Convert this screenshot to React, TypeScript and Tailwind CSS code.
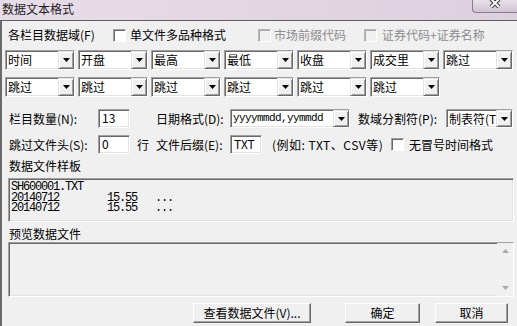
import React from 'react';

const sunken =
  'border border-t-[#a0a0a0] border-l-[#a0a0a0] border-b-white border-r-white shadow-[inset_1px_1px_0_#696969,inset_-1px_-1px_0_#e3e3e3]';

function Arrow() {
  return (
    <div className="w-[16px] h-full flex items-center justify-center bg-[#f0f0f0] border border-t-[#e3e3e3] border-l-[#e3e3e3] border-b-[#696969] border-r-[#696969] shadow-[inset_1px_1px_0_#ffffff,inset_-1px_-1px_0_#a0a0a0]">
      <svg width="7" height="4" viewBox="0 0 7 4">
        <path d="M0 0h7L3.5 4z" fill="#000" />
      </svg>
    </div>
  );
}

function Select({ value, width, mono = false }: { value: string; width: string; mono?: boolean }) {
  return (
    <div className={`${width} h-full flex bg-white ${sunken}`}>
      <div
        className={`flex-1 pl-[2px] flex items-center overflow-hidden whitespace-nowrap ${
          mono ? "font-['Liberation_Mono',monospace] text-[11px] tracking-[-0.6px]" : 'text-[12px]'
        }`}
      >
        {value}
      </div>
      <Arrow />
    </div>
  );
}

function Input({ value, width }: { value: string; width: string }) {
  return (
    <div className={`${width} h-full bg-white ${sunken} flex items-start pl-[3px] pt-[1px] text-[12px] leading-[14px]`}>
      {value}
    </div>
  );
}

function Check({ disabled = false }: { disabled?: boolean }) {
  return (
    <div
      className={`w-[13px] h-[13px] shrink-0 border ${
        disabled
          ? 'border-t-[#b8b8b8] border-l-[#b8b8b8] border-b-white border-r-white bg-[#f0f0f0] shadow-[inset_1px_1px_0_#a8a8a8]'
          : 'border-t-[#a0a0a0] border-l-[#a0a0a0] border-b-white border-r-white bg-white shadow-[inset_1px_1px_0_#696969]'
      }`}
    />
  );
}

function Button({ label, width }: { label: string; width: string }) {
  return (
    <div
      className={`${width} h-[20px] flex items-center justify-center text-[12px] bg-[#f0f0f0] border border-t-white border-l-white border-b-[#696969] border-r-[#696969] shadow-[inset_-1px_-1px_0_#a0a0a0]`}
    >
      {label}
    </div>
  );
}

export default function App() {
  const topFields = ['时间', '开盘', '最高', '最低', '收盘', '成交里', '跳过'];
  const lowFields = ['跳过', '跳过', '跳过', '跳过', '跳过', '跳过'];

  return (
    <div className="w-[517px] h-[326px] overflow-hidden flex flex-col bg-[#f0f0f0] text-black font-['Noto_Sans_CJK_SC',sans-serif] leading-none">
      {/* title bar */}
      <div className="h-[20px] shrink-0 flex justify-between bg-gradient-to-r from-[#e7dde7] via-[#e2d6e3] to-[#ddd0de]">
        <div className="pl-[2px] pt-[3px] text-[12px] text-[#1c1c1c]">数据文本格式</div>
        <div className="relative w-[45px] h-[13px] border border-t-0 border-r-0 border-[#8a7d8c] rounded-bl-[4px] bg-gradient-to-b from-[#e9e0ea] to-[#cfc3d1] flex justify-center">
          <svg width="12" height="9" viewBox="0 0 12 9" className="mt-[-1px]">
            <path d="M2 0l8 8M10 0L2 8" stroke="#3a3a3a" strokeWidth="4" />
            <path d="M2 0l8 8M10 0L2 8" stroke="#fff" strokeWidth="2" />
          </svg>
        </div>
      </div>

      {/* body */}
      <div className="flex-1 flex flex-col border-t border-l-2 border-t-[#5e5e5e] border-l-[#6a6a6a]">
        {/* row 1 */}
        <div className="mt-[6px] h-[16px] flex items-center text-[12px]">
          <span className="ml-[6px] w-[105px]">各栏目数据域(F)</span>
          <Check />
          <span className="ml-[4px] w-[128px]">单文件多品种格式</span>
          <Check disabled />
          <span className="ml-[3px] w-[90px] text-[#8d8d8d]">市场前缀代码</span>
          <Check disabled />
          <span className="ml-[5px] text-[#8d8d8d]">证券代码+证券名称</span>
        </div>

        {/* field selects */}
        <div className="mt-[7px] h-[20px] flex gap-[3px] pl-[3px]">
          {topFields.map((f, i) => (
            <Select key={i} value={f} width="w-[70px]" />
          ))}
        </div>
        <div className="mt-[7px] h-[20px] flex gap-[3px] pl-[3px]">
          {lowFields.map((f, i) => (
            <Select key={i} value={f} width="w-[70px]" />
          ))}
        </div>

        {/* row 3 */}
        <div className="mt-[12px] h-[19px] flex items-center text-[12px]">
          <span className="ml-[7px] w-[89px]">栏目数量(N):</span>
          <Input value="13" width="w-[32px]" />
          <span className="ml-[26px] w-[74px]">日期格式(D):</span>
          <Select value="yyyymmdd,yymmdd" width="w-[120px]" mono />
          <span className="ml-[8px] w-[88px]">数域分割符(P):</span>
          <Select value="制表符(T" width="w-[67px]" />
        </div>

        {/* row 4 */}
        <div className="mt-[7px] h-[19px] flex items-center text-[12px]">
          <span className="ml-[7px] w-[89px]">跳过文件头(S):</span>
          <Input value="0" width="w-[32px]" />
          <span className="ml-[7px] w-[19px]">行</span>
          <span className="w-[74px]">文件后缀(E):</span>
          <Input value="TXT" width="w-[32px]" />
          <span className="ml-[10px] w-[119px] whitespace-nowrap tracking-[0.5px]">(例如: TXT、CSV等)</span>
          <Check />
          <span className="ml-[5px]">无冒号时间格式</span>
        </div>

        {/* sample */}
        <div className="mt-[4px] h-[16px] flex items-center text-[12px] pl-[7px]">数据文件样板</div>
        <div className={`mt-[4px] ml-[6px] w-[506px] h-[44px] bg-[#f0f0f0] ${sunken}`}>
          <pre className="pl-[2px] pt-[3px] font-['Liberation_Mono',monospace] text-[12px] tracking-[-1.2px] leading-[10.5px]">
            {'SH600001.TXT\n20140712        15.55   ...\n20140712        15.55   ...'}
          </pre>
        </div>

        {/* preview */}
        <div className="mt-[4px] h-[16px] flex items-center text-[12px] pl-[7px]">预览数据文件</div>
        <div className={`ml-[6px] w-[506px] h-[55px] flex justify-end bg-[#f0f0f0] ${sunken}`}>
          <div className="w-[16px] h-full flex flex-col justify-between items-center py-[6px] bg-[#f0f0f0]">
            <svg width="7" height="4" viewBox="0 0 7 4">
              <path d="M0 4h7L3.5 0z" fill="#a8a8a8" />
            </svg>
            <svg width="7" height="4" viewBox="0 0 7 4">
              <path d="M0 0h7L3.5 4z" fill="#a8a8a8" />
            </svg>
          </div>
        </div>

        {/* buttons */}
        <div className="mt-[6px] flex">
          <div className="ml-[191px]">
            <Button label="查看数据文件(V)..." width="w-[118px]" />
          </div>
          <div className="ml-[34px]">
            <Button label="确定" width="w-[75px]" />
          </div>
          <div className="ml-[15px]">
            <Button label="取消" width="w-[73px]" />
          </div>
        </div>
      </div>
    </div>
  );
}
